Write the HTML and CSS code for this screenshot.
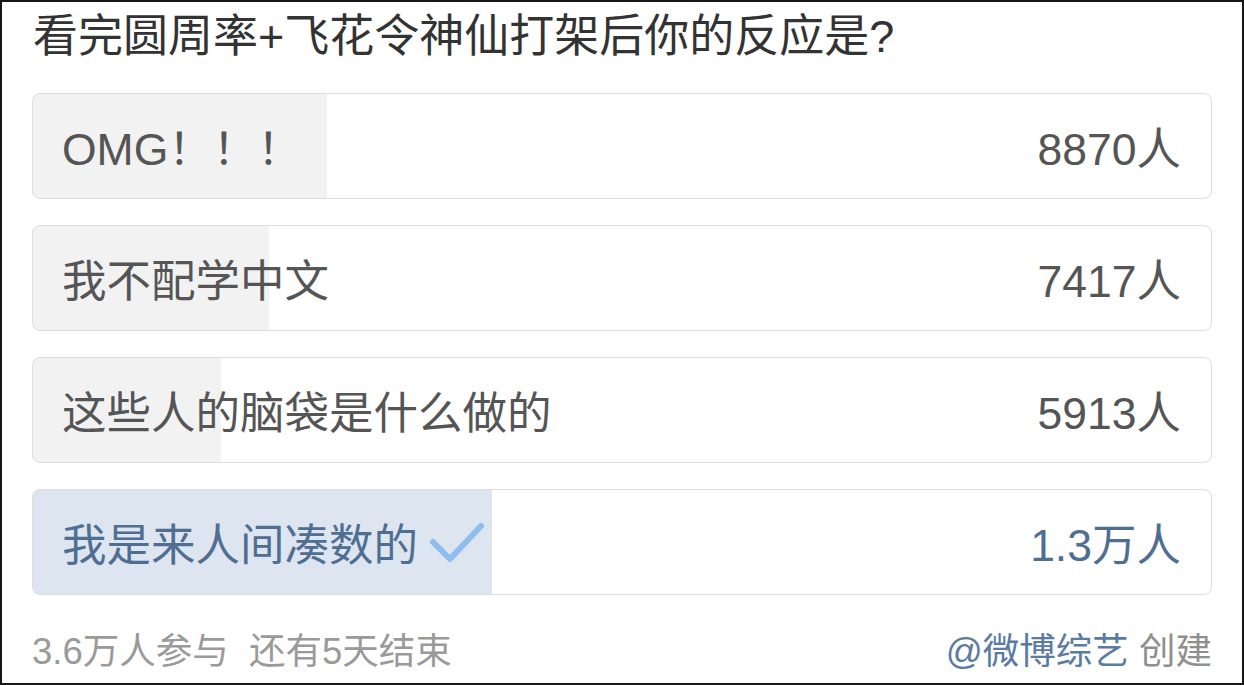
FILE: index.html
```html
<!DOCTYPE html>
<html lang="zh-CN">
<head>
    <meta charset="UTF-8">
    <meta name="viewport" content="width=device-width, initial-scale=1.0">
    <title>投票</title>
    <link rel="stylesheet" href="styles.css">
</head>
<body>
    <div class="poll">
        <h1 class="poll-title">看完圆周率+飞花令神仙打架后你的反应是?</h1>

        <div class="options">
            <div class="option" style="--pct: 25%">
                <span class="label">OMG！！！</span>
                <span class="count">8870人</span>
            </div>
            <div class="option" style="--pct: 20%">
                <span class="label">我不配学中文</span>
                <span class="count">7417人</span>
            </div>
            <div class="option" style="--pct: 16%">
                <span class="label">这些人的脑袋是什么做的</span>
                <span class="count">5913人</span>
            </div>
            <div class="option selected" style="--pct: 39%">
                <span class="label">我是来人间凑数的
                    <svg class="check" width="54" height="42" viewBox="0 0 54 42">
                        <path d="M3 20 L20 37 L51 4" fill="none" stroke="#8fbdee" stroke-width="6" stroke-linecap="round" stroke-linejoin="round"/>
                    </svg>
                </span>
                <span class="count">1.3万人</span>
            </div>
        </div>

        <div class="footer">
            <span class="meta">3.6万人参与&nbsp;&nbsp;还有5天结束</span>
            <span class="creator"><span class="author">@微博综艺</span> 创建</span>
        </div>
    </div>
</body>
</html>
```

FILE: styles.css
```css
body {
    margin: 0;
    padding: 0;
    background-color: #ffffff;
    font-family: "Liberation Sans", "Noto Sans CJK SC", sans-serif;
}

.poll {
    box-sizing: border-box;
    width: 1244px;
    height: 685px;
    border: 2px solid #161616;
    padding: 0 30px;
    background-color: #ffffff;
}

.poll-title {
    margin: 7px 0 28px 1px;
    font-size: 45px;
    line-height: 56px;
    font-weight: 400;
    color: #333333;
}

.options {
    display: flex;
    flex-direction: column;
    gap: 26px;
}

.option {
    box-sizing: border-box;
    height: 106px;
    display: flex;
    align-items: center;
    justify-content: space-between;
    padding: 0 30px 2px 29px;
    border: 1px solid #dddddd;
    border-radius: 8px;
    background: linear-gradient(to right, #f2f2f2 var(--pct), #ffffff var(--pct));
    font-size: 44.5px;
    color: #555555;
}

.option.selected {
    background: linear-gradient(to right, #dde6f0 var(--pct), #ffffff var(--pct));
    color: #4f6e92;
}

.label {
    display: flex;
    align-items: center;
    gap: 12px;
}

.check {
    display: block;
    margin-top: 4px;
}

.footer {
    display: flex;
    justify-content: space-between;
    align-items: center;
    margin-top: 32px;
    font-size: 36.5px;
    line-height: 50px;
    color: #9a9a9a;
}

.creator {
    color: #8f8f8f;
}

.author {
    color: #5a7ba2;
}
```
